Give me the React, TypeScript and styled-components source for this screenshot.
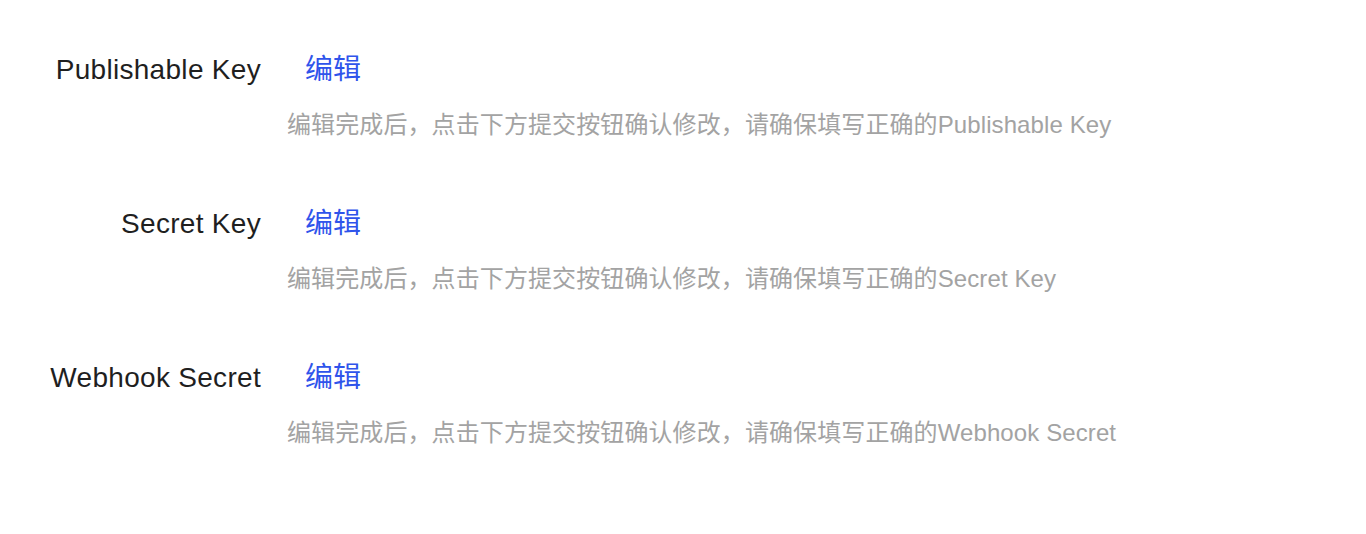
import { createGlobalStyle } from "styled-components";
import styled from "styled-components";

const GlobalStyle = createGlobalStyle`
    body {
        margin: 0;
        background: #ffffff;
        font-family: "Liberation Sans", "Noto Sans CJK SC", sans-serif;
    }
`;

const Form = styled.div`
    display: flex;
    flex-direction: column;
    gap: 62px;
    padding-top: 50px;
`;

const Row = styled.div`
    display: grid;
    grid-template-columns: 261px 1fr;
    column-gap: 26px;
`;

const Label = styled.label`
    text-align: right;
    font-size: 28px;
    line-height: 40px;
    letter-spacing: 0.3px;
    color: #1f1f1f;
    white-space: nowrap;
`;

const Control = styled.div`
    display: flex;
    flex-direction: column;
    align-items: flex-start;
`;

const EditLink = styled.a`
    padding-left: 18px;
    font-size: 28px;
    line-height: 40px;
    color: #2f54eb;
    text-decoration: none;
    cursor: pointer;
`;

const Help = styled.div`
    margin-top: 18px;
    font-size: 24px;
    line-height: 34px;
    letter-spacing: 0.1px;
    color: #a3a3a3;
    white-space: nowrap;
`;

const fields = ["Publishable Key", "Secret Key", "Webhook Secret"];

function App() {
    return (
        <>
            <GlobalStyle />
            <Form>
                {fields.map((name) => (
                    <Row key={name}>
                        <Label>{name}</Label>
                        <Control>
                            <EditLink>编辑</EditLink>
                            <Help>
                                编辑完成后，点击下方提交按钮确认修改，请确保填写正确的{name}
                            </Help>
                        </Control>
                    </Row>
                ))}
            </Form>
        </>
    );
}

export default App;
